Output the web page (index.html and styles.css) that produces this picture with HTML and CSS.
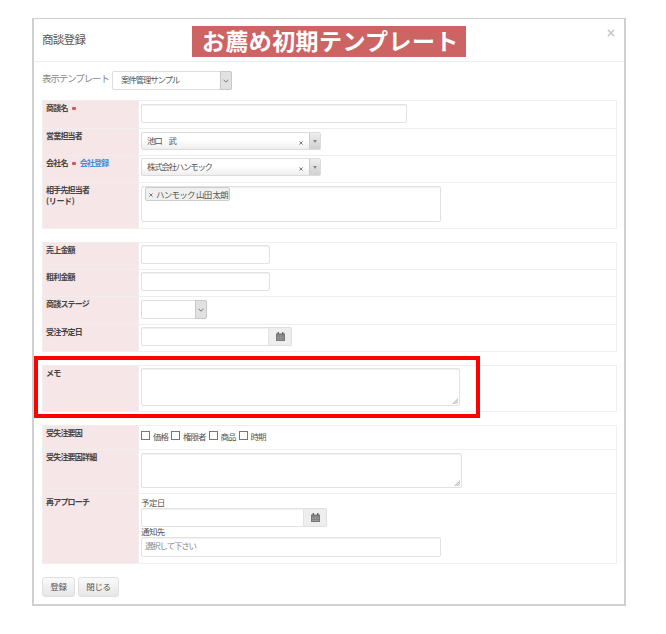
FILE: index.html
```html
<!DOCTYPE html>
<html lang="ja">
<head>
<meta charset="utf-8">
<title>商談登録</title>
<link rel="stylesheet" href="styles.css">
</head>
<body>
<main class="modal">
  <header class="head">
    <h1 class="title">商談登録</h1>
    <div class="banner">お薦め初期テンプレート</div>
    <svg class="close" viewBox="0 0 8 8"><path d="M.8.8 7.2 7.2M7.2.8.8 7.2"/></svg>
  </header>
  <div class="template">
    <span class="template-label">表示テンプレート</span>
    <div class="select w-template"><span>案件管理サンプル</span><i class="drop"><svg viewBox="0 0 6 4"><path d="M.5.7 3 3.2 5.5.7"/></svg></i></div>
  </div>

  <section class="group">
    <div class="row r28"><div class="label">商談名 <b class="req"></b></div><div class="cell"><div class="input w-name"></div></div></div>
    <div class="row r27"><div class="label">営業担当者</div><div class="cell"><div class="combo"><span>池口　武</span><svg class="clear" viewBox="0 0 5 5"><path d="M.5.5l4 4M4.5.5l-4 4"/></svg><i class="arrow"></i></div></div></div>
    <div class="row r27"><div class="label">会社名 <b class="req"></b> <a>会社登録</a></div><div class="cell short"><div class="combo"><span>株式会社ハンモック</span><svg class="clear" viewBox="0 0 5 5"><path d="M.5.5l4 4M4.5.5l-4 4"/></svg><i class="arrow"></i></div></div></div>
    <div class="row r46"><div class="label">相手先担当者<br><span class="kana">(リード)</span></div><div class="cell"><div class="input multi"><span class="tag"><svg viewBox="0 0 5 5"><path d="M.5.5l4 4M4.5.5l-4 4"/></svg>ハンモック 山田 太朗</span></div></div></div>
  </section>

  <section class="group">
    <div class="row r27"><div class="label">売上金額</div><div class="cell short"><div class="input w-money"></div></div></div>
    <div class="row r27"><div class="label">粗利金額</div><div class="cell short"><div class="input w-money"></div></div></div>
    <div class="row r28"><div class="label">商談ステージ</div><div class="cell"><div class="select w-stage"><i class="drop"><svg viewBox="0 0 6 4"><path d="M.5.7 3 3.2 5.5.7"/></svg></i></div></div></div>
    <div class="row r27"><div class="label">受注予定日</div><div class="cell short"><div class="date"><div class="input"></div><i class="cal"><svg viewBox="0 0 9 9"><path class="body" d="M0 1.5h9V9H0z"/><path class="pins" d="M2.3 0v2.5M6.7 0v2.5"/><path class="days" d="M1.2 4h6.6M1.2 5.7h6.6M1.2 7.4h6.6"/></svg></i></div></div></div>
  </section>

  <section class="group memo">
    <div class="row r46"><div class="label">メモ</div><div class="cell short"><div class="input area w-memo"><i class="grip"></i></div></div></div>
    <div class="highlight"></div>
  </section>

  <section class="group">
    <div class="row r24"><div class="label">受失注要因</div><div class="cell checks"><i class="box"></i><span>価格</span><i class="box"></i><span>権限者</span><i class="box"></i><span>商品</span><i class="box"></i><span>時期</span></div></div>
    <div class="row r44"><div class="label">受失注要因詳細</div><div class="cell"><div class="input area w-detail"><i class="grip"></i></div></div></div>
    <div class="row r70"><div class="label pad">再アプローチ</div><div class="cell stack"><span class="sub">予定日</span><div class="date wide"><div class="input"></div><i class="cal"><svg viewBox="0 0 9 9"><path class="body" d="M0 1.5h9V9H0z"/><path class="pins" d="M2.3 0v2.5M6.7 0v2.5"/><path class="days" d="M1.2 4h6.6M1.2 5.7h6.6M1.2 7.4h6.6"/></svg></i></div><span class="sub second">通知先</span><div class="input notify">選択して下さい</div></div></div>
  </section>

  <footer class="actions"><div class="btn save">登録</div><div class="btn shut">閉じる</div></footer>
</main>
</body>
</html>
```
FILE: styles.css
```css
* { box-sizing: border-box; }
body {
  margin: 0;
  padding: 18px 0 0 32px;
  background: #fff;
  color: #555;
  font: 8.5px/11px "Noto Sans CJK JP", sans-serif;
  white-space: nowrap;
}
i { font-style: normal; flex: none; }
svg { display: block; flex: none; }
.modal {
  width: 594px;
  height: 588px;
  border: 2px solid #d0d0d0;
  border-top-width: 1.5px;
  padding: 0 8px;
}
.head {
  display: flex;
  height: 43px;
  margin: 0 -8px;
  padding: 7px 9px 0 8px;
  border-bottom: 1px solid #eee;
}
.title {
  width: 150px;
  margin: 4px 0 0;
  font-size: 11.5px;
  line-height: 18px;
  font-weight: 400;
  letter-spacing: -.7px;
  color: #555;
}
.banner {
  width: 274px;
  height: 31px;
  padding-left: 10px;
  background: #cd6464;
  color: #fff;
  font-size: 23px;
  line-height: 29px;
  font-weight: 700;
  letter-spacing: .4px;
}
.close { width: 8px; height: 8px; margin: 3px 0 0 auto; }
.close path { stroke: #c4c4c4; stroke-width: 1.4; }
.template { display: flex; height: 38px; padding-top: 9px; }
.template-label { width: 70px; line-height: 15px; font-size: 9.5px; letter-spacing: -1.1px; color: #888; }

.group { width: 575px; margin-bottom: 13px; border: solid #f0f0f0; border-width: 0 1px 1px; }
.row { display: grid; grid-template-columns: 96px 1fr; border-top: 1px solid #eee; }
.r24 { height: 24px; }
.r27 { height: 27px; }
.r28 { height: 28px; }
.r44 { height: 44px; }
.r46 { height: 46px; }
.r70 { height: 70px; }
.label {
  padding: 1px 0 0 3px;
  background: #f6e6e8;
  border-right: 1px solid #eee;
  color: #444;
  font-size: 8px;
  font-weight: 700;
  letter-spacing: -.8px;
}
.label a { color: #3e8fd8; margin-left: 2px; }
.label.pad { padding-top: 2px; }
.kana { letter-spacing: -.3px; }
.req { display: inline-block; width: 4px; height: 3px; margin: 0 1px 1px 3px; border-radius: 1px; background: #d0585c; vertical-align: middle; }
.cell { padding: 3px 0 0 2px; }
.cell.short { padding-top: 2px; }

.input { height: 19px; border: 1px solid #e2e2e2; border-radius: 2px; background: #fff; box-shadow: inset 0 1px 1px #f1f1f1; }
.w-name { width: 266px; }
.w-money { width: 129px; }
.multi { width: 300px; height: 36px; padding: 0 3px; }
.tag {
  display: inline-flex;
  align-items: center;
  width: 85px;
  height: 14px;
  padding-left: 3px;
  gap: 3px;
  border: 1px solid #ccc;
  border-radius: 2px;
  background: #f0f0f0;
  color: #555;
  line-height: 10px;
  letter-spacing: -.75px;
}
.tag svg { width: 4px; height: 4px; margin-top: 1px; }
.tag path, .clear path { stroke: #777; stroke-width: 1.2; }

.select { display: flex; height: 19px; border: 1px solid #dedede; border-radius: 2px; }
.select span { padding-left: 8px; line-height: 14px; letter-spacing: -1.2px; }
.w-template { width: 120px; }
.w-stage { width: 66px; }
.drop { display: grid; place-items: center; width: 12px; margin: -1px -1px -1px auto; border: 1px solid #c8c8c8; border-radius: 0 2px 2px 0; background: #e1e1e1; }
.drop svg { width: 6px; height: 4px; }
.drop path { fill: none; stroke: #777; }

.combo {
  display: flex;
  align-items: center;
  width: 180px;
  height: 18px;
  border: 1px solid #dcdcdc;
  border-radius: 2px;
  background: linear-gradient(#fff 45%, #eee);
}
.combo span { padding: 0 0 2px 5px; letter-spacing: -1.3px; }
.clear { width: 4px; height: 4px; margin: 3px 6px 0 auto; }
.arrow { display: grid; place-items: center; width: 11px; height: 16px; border-left: 1px solid #ccc; background: linear-gradient(#eee, #d0d0d0); }
.arrow::before { content: ""; border: 2px solid transparent; border-top: 3px solid #888; border-bottom: 0; }

.date { display: flex; width: 151px; }
.date .input { flex: 1; border-radius: 2px 0 0 2px; }
.cal { display: grid; place-items: center; width: 23px; height: 19px; border: 1px solid #dedede; border-left: 0; border-radius: 0 2px 2px 0; background: #eee; }
.cal svg { width: 9px; height: 9px; }
.cal .body { fill: #777; }
.cal .pins { stroke: #666; stroke-width: 1.4; }
.cal .days { stroke: #bbb; stroke-width: .8; stroke-dasharray: 1 .4; }
.date.wide { width: 186px; }

.memo { position: relative; }
.highlight { position: absolute; left: -9px; top: -9px; width: 446px; height: 62px; border: 4px solid #f00; }
.area { display: flex; align-items: flex-end; justify-content: flex-end; padding: 1px; }
.w-memo { width: 319px; height: 38px; }
.w-detail { width: 321px; height: 35px; }
.grip { width: 6px; height: 6px; background: repeating-linear-gradient(135deg, #c4c4c4 0 1px, #e4e4e4 1px 2px); clip-path: polygon(100% 0, 100% 100%, 0 100%); }

.checks { display: flex; padding-top: 5px; line-height: 10px; letter-spacing: -1px; }
.checks span { margin: 0 3px 0 3px; }
.box { width: 9px; height: 9px; border: 1px solid #777; background: #fff; }
.stack { display: flex; flex-direction: column; }
.sub { height: 11px; line-height: 10px; letter-spacing: -.6px; }
.sub.second { height: 10px; line-height: 8px; }
.notify { width: 300px; height: 20px; padding-left: 3px; line-height: 15px; color: #888; letter-spacing: -1.2px; }

.actions { display: flex; gap: 3px; }
.btn { height: 20px; border: 1px solid #e0e0e0; border-radius: 3px; background: linear-gradient(#fafafa, #e6e6e6); line-height: 16px; text-align: center; letter-spacing: -.3px; }
.save { width: 33px; }
.shut { width: 41px; }
```
